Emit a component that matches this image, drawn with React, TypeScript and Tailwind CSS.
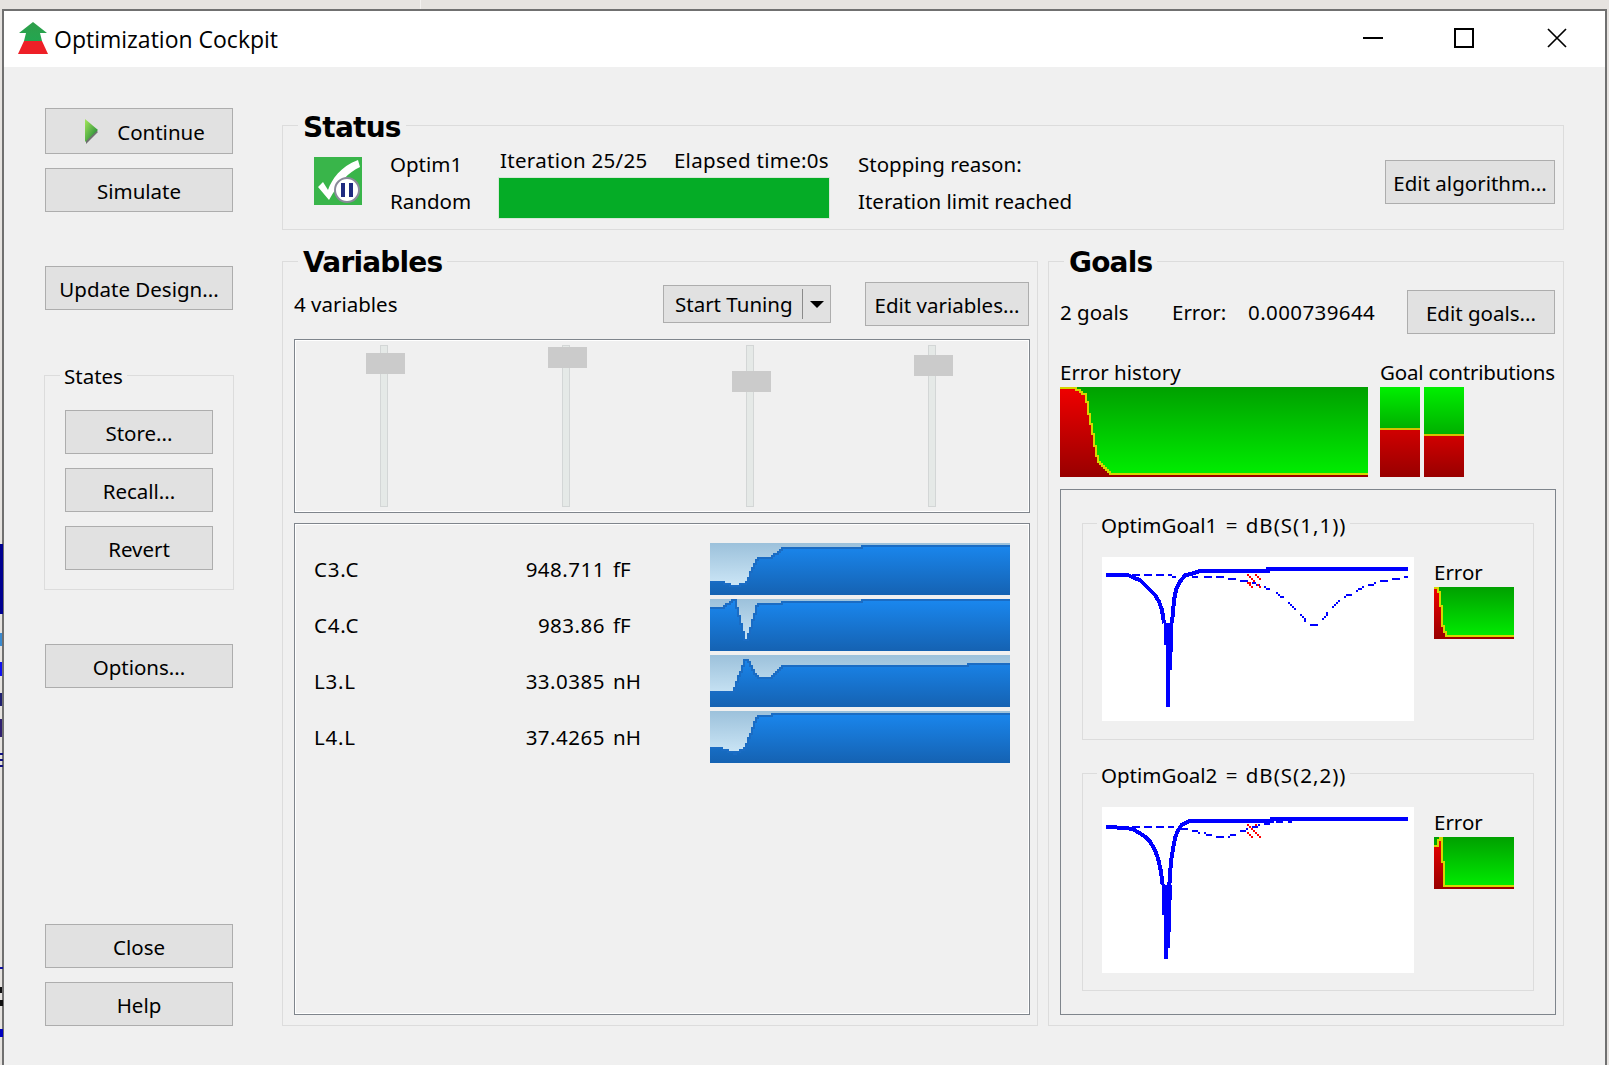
import React from "react";

type Step = [number, number];

function StepChart({ id, steps, x0, y0, w, h, bg, fill, edge, edgeW = 6 }: { id: string; steps: Step[]; x0: number; y0: number; w: number; h: number; bg: [string, string]; fill: [string, string]; edge: string; edgeW?: number }) {
  const x1 = x0 + w * 3;
  const y1 = y0 + h * 3;
  let d = `M${x0} ${steps[0][1]}`;
  steps.forEach((s, i) => {
    d += ` H${s[0]}`;
    if (i + 1 < steps.length) d += ` V${steps[i + 1][1]}`;
  });
  return (
    <svg width={w} height={h} viewBox={`${x0} ${y0} ${w * 3} ${h * 3}`} shapeRendering="crispEdges" className="block shrink-0">
      <defs>
        <linearGradient id={id + "b"} gradientUnits="userSpaceOnUse" x1="0" y1={y0} x2="0" y2={y1}>
          <stop offset="0" stopColor={bg[0]} />
          <stop offset="1" stopColor={bg[1]} />
        </linearGradient>
        <linearGradient id={id + "f"} gradientUnits="userSpaceOnUse" x1="0" y1={y0} x2="0" y2={y1}>
          <stop offset="0" stopColor={fill[0]} />
          <stop offset="1" stopColor={fill[1]} />
        </linearGradient>
      </defs>
      <rect x={x0} y={y0} width={w * 3} height={h * 3} fill={`url(#${id}b)`} />
      <path d={`${d} V${y1} H${x0} Z`} fill={`url(#${id}f)`} />
      <path d={d} fill="none" stroke={edge} strokeWidth={edgeW} transform={`translate(0 ${edgeW / 2})`} />
    </svg>
  );
}

const rows: { name: string; num: string; unit: string; top: number; steps: Step[] }[] = [
  { name: "C3.C", num: "948.711", unit: "fF", top: 39, steps: [[72, 153], [90, 159], [120, 165], [138, 159], [144, 153], [150, 141], [156, 123], [162, 111], [168, 99], [174, 87], [216, 81], [222, 75], [234, 69], [240, 63], [246, 57], [486, 51], [930, 45]] },
  { name: "C4.C", num: "983.86", unit: "fF", top: 207, steps: [[72, 231], [78, 225], [90, 219], [96, 213], [108, 207], [114, 231], [120, 255], [126, 279], [132, 303], [144, 327], [150, 309], [156, 291], [162, 267], [168, 249], [174, 225], [246, 219], [486, 213], [930, 207]] },
  { name: "L3.L", num: "33.0385", unit: "nH", top: 375, steps: [[102, 483], [108, 471], [114, 453], [120, 435], [126, 423], [132, 405], [144, 387], [150, 393], [156, 405], [162, 417], [168, 429], [174, 435], [216, 441], [222, 435], [228, 429], [234, 423], [240, 417], [246, 411], [804, 405], [930, 399]] },
  { name: "L4.L", num: "37.4265", unit: "nH", top: 543, steps: [[66, 651], [84, 657], [102, 663], [108, 669], [120, 663], [132, 657], [138, 651], [144, 639], [150, 621], [156, 609], [162, 591], [168, 573], [174, 561], [216, 555], [930, 549]] },
];

const historySteps: Step[] = [[78, 81], [90, 87], [96, 93], [108, 99], [114, 123], [120, 159], [126, 189], [132, 219], [138, 255], [144, 285], [150, 303], [156, 309], [162, 315], [168, 321], [174, 327], [180, 333], [954, 339]];
const err1: Step[] = [[1044, 111], [1050, 123], [1056, 165], [1062, 225], [1068, 243], [1272, 255]];
const err2: Step[] = [[1044, 165], [1050, 147], [1056, 141], [1062, 213], [1272, 285]];

const RED: [string, string] = ["#f00000", "#980000"];
const GREEN: [string, string] = ["#00a000", "#00f000"];
const YEL = "#d6d600";

const dash1: [number, number, number][] = [[126, 72, 24], [162, 72, 24], [198, 72, 24], [234, 72, 12], [246, 78, 12], [306, 78, 18], [342, 78, 24], [378, 78, 24], [414, 84, 24], [450, 90, 24], [486, 96, 12], [498, 102, 12], [522, 108, 6], [528, 114, 12], [558, 126, 6], [564, 132, 6], [570, 138, 12], [594, 156, 6], [600, 162, 6], [606, 168, 6], [612, 174, 6], [630, 192, 6], [636, 198, 6], [642, 204, 6], [642, 210, 6], [660, 222, 24], [696, 204, 6], [702, 198, 6], [708, 186, 6], [708, 192, 6], [726, 168, 6], [732, 162, 6], [738, 156, 6], [744, 150, 6], [762, 138, 6], [768, 132, 18], [798, 120, 6], [804, 114, 12], [816, 108, 6], [834, 102, 18], [852, 96, 6], [870, 90, 24], [906, 84, 24], [942, 78, 12]];
const dash2: [number, number, number][] = [[126, 108, 24], [162, 108, 24], [198, 108, 24], [234, 108, 18], [270, 114, 24], [306, 120, 18], [324, 126, 6], [342, 126, 6], [348, 132, 18], [378, 138, 24], [414, 138, 6], [420, 132, 18], [450, 120, 18], [468, 114, 6], [486, 108, 18], [504, 102, 6]];
const red1: Step[] = [[470, 72], [476, 78], [482, 84], [488, 90], [476, 96], [470, 96], [476, 102], [482, 108], [494, 72], [500, 78], [506, 84], [500, 102], [506, 108]];
const red2: Step[] = [[470, 102], [476, 108], [482, 114], [488, 120], [494, 126], [500, 132], [506, 138], [494, 102], [470, 126], [476, 132], [482, 138]];

function Btn({ children, className = "" }: { children: React.ReactNode; className?: string }) {
  return <div className={`flex items-center justify-center border border-[#adadad] bg-[#e1e1e1] text-black shrink-0 pt-[2px] ${className}`}>{children}</div>;
}

function Group({ title, className = "", legend = "", children }: { title: React.ReactNode; className?: string; legend?: string; children: React.ReactNode }) {
  return (
    <div className={`relative border border-[#dcdcdc] ${className}`}>
      <div className={`absolute bg-[#f0f0f0] whitespace-nowrap ${legend}`}>{title}</div>
      {children}
    </div>
  );
}

function Big({ children }: { children: React.ReactNode }) {
  return <span className="font-['DejaVu_Sans',sans-serif] text-[28px] font-bold leading-[34px] tracking-[-0.8px]">{children}</span>;
}

function Rects({ dashes, reds }: { dashes: [number, number, number][]; reds: Step[] }) {
  return (
    <>
      {dashes.map((r, i) => <rect key={i} x={r[0]} y={r[1]} width={r[2]} height="6" fill="#0000ff" />)}
      {reds.map((r, i) => <rect key={i} x={r[0]} y={r[1]} width="6" height="6" fill="#ff0000" />)}
    </>
  );
}

function Plot1() {
  return (
    <svg width="312" height="164" viewBox="36 21 936 492" shapeRendering="crispEdges" className="block shrink-0 bg-white">
      <Rects dashes={dash1} reds={[]} />
      <g fill="none" stroke="#0000ff" strokeWidth="12">
        <polyline points="48,75 114,75 132,84 150,90 165,105 180,120 195,135 207,155 216,180 222,220" />
        <polyline points="246,220 252,150 258,120 270,95 285,76 310,70 330,63 534,63 534,57 954,57" />
      </g>
      <polygon fill="#0000ff" points="222,220 250,220 246,360 240,360 240,470 228,470 228,285 222,285" />
      <Rects dashes={[]} reds={red1} />
    </svg>
  );
}

function Plot2() {
  return (
    <svg width="312" height="166" viewBox="36 51 936 498" shapeRendering="crispEdges" className="block shrink-0 bg-white">
      <Rects dashes={dash2} reds={[]} />
      <g fill="none" stroke="#0000ff">
        <polyline strokeWidth="12" points="48,111 110,114 130,118 150,130 165,140 180,155 195,180 204,205 212,240 218,285" />
        <polyline strokeWidth="12" points="238,285 243,215 250,170 256,140 265,120 275,105 300,93 546,93 546,87 954,87" />
        <polyline strokeWidth="12" points="522,99 540,99" />
        <polyline strokeWidth="9" points="558,94 580,94" />
        <polyline strokeWidth="9" points="594,94 606,94" />
      </g>
      <polygon fill="#0000ff" points="216,285 246,285 240,475 234,475 234,507 222,507 222,375 216,375" />
      <Rects dashes={[]} reds={red2} />
    </svg>
  );
}

function Slider({ handle, track = "" }: { handle: string; track?: string }) {
  return (
    <div className={`relative w-[8px] h-[162px] border border-[#d3d6d6] bg-[#e5e9e7] ${track}`}>
      <div className={`absolute w-[39px] h-[21px] bg-[#cbcbcb] ${handle}`} />
    </div>
  );
}

function GoalBox({ name, eq, plot, err, h }: { name: string; eq: string; plot: React.ReactNode; err: React.ReactNode; h: string }) {
  return (
    <Group
      title={
        <span className="relative top-[1px] [word-spacing:3px]">
          {name} = <span className="tracking-[1px]">{eq}</span>
        </span>
      }
      className={`${h} ml-[21px] mr-[21px] flex shrink-0`}
      legend="left-[14px] -top-[13px] px-1 leading-[26px]"
    >
      <div className="pl-[19px] pt-[33px]">{plot}</div>
      <div className="pl-[20px] pt-[34px]">
        <div className="leading-[28px]">Error</div>
        <div className="mt-[1px]">{err}</div>
      </div>
    </Group>
  );
}

export default function App() {
  return (
    <div className="relative w-[1609px] h-[1065px] overflow-hidden bg-[#e6e3e0] pt-[9px] px-[2px] font-['Noto_Sans',sans-serif] text-[20.5px] text-black">
      <div className="absolute left-[420px] top-0 w-px h-[9px] bg-[#f4f2f0]" />
      <div className="absolute left-0 top-[544px] w-[3px] h-[70px] bg-[#000090]" />
      <div className="absolute left-0 top-[633px] w-[2px] h-[13px] bg-[#3a8ad0]" />
      <div className="absolute left-0 top-[662px] w-[2px] h-[14px] bg-[#1010f0]" />
      <div className="absolute left-0 top-[693px] w-[2px] h-[13px] bg-[#202070]" />
      <div className="absolute left-0 top-[719px] w-[2px] h-[18px] bg-[#302070]" />
      <div className="absolute left-0 top-[753px] w-[3px] h-[2px] bg-[#101080]" />
      <div className="absolute left-0 top-[759px] w-[3px] h-[2px] bg-[#101080]" />
      <div className="absolute left-0 top-[765px] w-[3px] h-[2px] bg-[#101080]" />
      <div className="absolute left-0 top-[967px] w-[3px] h-[2px] bg-[#1010a0]" />
      <div className="absolute left-0 top-[987px] w-[2px] h-[6px] bg-[#101010]" />
      <div className="absolute left-0 top-[1000px] w-[3px] h-[6px] bg-[#101010]" />
      <div className="absolute left-0 top-[1029px] w-[3px] h-[8px] bg-[#0000c0]" />

      <div className="flex flex-col h-[1056px] border-t-2 border-x-2 border-[#707070]">
        {/* title bar */}
        <div className="flex items-center h-[56px] bg-white shrink-0 font-['Open_Sans',sans-serif] text-[23px]">
          <svg width="32" height="34" viewBox="0 0 32 34" className="ml-[14px] shrink-0">
            <defs>
              <linearGradient id="lg" x1="0" y1="0" x2="0" y2="1">
                <stop offset="0" stopColor="#2f9e4a" />
                <stop offset="1" stopColor="#23a650" />
              </linearGradient>
            </defs>
            <polygon points="15,0 29,11 22,11 24,19 6,19 8,11 1,11" fill="url(#lg)" />
            <polygon points="6,19 24,19 30,32 0,32" fill="#ee2027" />
          </svg>
          <span className="ml-[4px]">Optimization Cockpit</span>
          <svg width="20" height="20" viewBox="0 0 20 20" className="ml-auto -mt-[2px] shrink-0"><rect x="0" y="9" width="20" height="2" fill="#000" /></svg>
          <svg width="20" height="20" viewBox="0 0 20 20" className="ml-[71px] -mt-[2px] shrink-0"><rect x="1" y="1" width="18" height="18" fill="none" stroke="#000" strokeWidth="2" /></svg>
          <svg width="20" height="20" viewBox="0 0 20 20" className="ml-[73px] -mt-[2px] mr-[38px] shrink-0"><path d="M1 1L19 19M19 1L1 19" stroke="#000" strokeWidth="1.7" /></svg>
        </div>

        {/* body */}
        <div className="flex flex-1 min-h-0 bg-[#f0f0f0] pl-[41px] pr-[41px] pt-[41px] pb-[39px]">
          {/* left column */}
          <div className="flex flex-col w-[188px] shrink-0">
            <Btn className="h-[46px] pl-[15px]">
              <svg width="16" height="26" viewBox="0 0 16 26" className="mr-[17px] -ml-[4px] -mt-[2px]">
                <defs>
                  <linearGradient id="pl" x1="0" y1="0" x2="1" y2="1">
                    <stop offset="0" stopColor="#a6e85a" />
                    <stop offset="1" stopColor="#0b7a32" />
                  </linearGradient>
                </defs>
                <polygon points="2,3 14,14 2,26" fill="#707070" />
                <polygon points="1,1 14,12 1,24" fill="url(#pl)" />
              </svg>
              Continue
            </Btn>
            <Btn className="h-[44px] mt-[14px]">Simulate</Btn>
            <Btn className="h-[44px] mt-[54px]">Update Design...</Btn>
            <Group title="States" className="h-[215px] mt-[65px] -ml-px w-[190px] pl-[20px] pt-[34px] flex flex-col gap-[14px] shrink-0" legend="left-[15px] -top-[13px] px-1 leading-[26px]">
              <Btn className="h-[44px] w-[148px]">Store...</Btn>
              <Btn className="h-[44px] w-[148px]">Recall...</Btn>
              <Btn className="h-[44px] w-[148px]">Revert</Btn>
            </Group>
            <Btn className="h-[44px] mt-[54px]">Options...</Btn>
            <Btn className="h-[44px] mt-auto">Close</Btn>
            <Btn className="h-[44px] mt-[14px]">Help</Btn>
          </div>

          {/* right column */}
          <div className="flex flex-col flex-1 min-w-0 ml-[49px] pt-[17px]">
            {/* status */}
            <Group title={<span className="relative top-[3px]"><Big>Status</Big></span>} className="h-[105px] flex shrink-0" legend="left-[15px] -top-[18px] px-[5px]">
              <svg width="48" height="48" viewBox="0 0 48 48" className="ml-[31px] mt-[31px] shrink-0">
                <rect width="48" height="48" fill="#39b54a" />
                <path d="M4 30 L9 25 L14 33 C18 22 26 10 44 3 L46 10 C34 16 26 24 15 43 Z" fill="#fff" />
                <circle cx="33" cy="33" r="12" fill="#fff" stroke="#8a8a9a" strokeWidth="2" />
                <rect x="27" y="26" width="4" height="14" fill="#1f2a80" />
                <rect x="35" y="26" width="4" height="14" fill="#1f2a80" />
              </svg>
              <div className="ml-[28px] w-[109px] shrink-0 pt-[25px] leading-[26px]">
                <div>Optim1</div>
                <div className="mt-[11px]">Random</div>
              </div>
              <div className="w-[331px] shrink-0 pt-[21px]">
                <div className="flex justify-between leading-[26px] pr-[1px] pl-[1px] tracking-[0.3px]">
                  <span>Iteration 25/25</span>
                  <span>Elapsed time:0s</span>
                </div>
                <div className="h-[42px] mt-[4px] -ml-px bg-[#05ac26] border border-[#d8e8d8]" />
              </div>
              <div className="ml-[28px] pt-[25px] leading-[26px]">
                <div>Stopping reason:</div>
                <div className="mt-[11px]">Iteration limit reached</div>
              </div>
              <Btn className="ml-auto mr-[8px] mt-[34px] h-[44px] w-[170px]">Edit algorithm...</Btn>
            </Group>

            <div className="flex flex-1 min-h-0 mt-[31px] gap-[10px]">
              {/* variables */}
              <Group title={<span className="relative top-[2px]"><Big>Variables</Big></span>} className="w-[756px] shrink-0 flex flex-col pl-[11px] pr-[7px] pt-[20px] pb-[10px]" legend="left-[15px] -top-[18px] px-[5px]">
                <div className="flex items-center h-[44px] shrink-0">
                  <span>4 variables</span>
                  <div className="ml-auto flex items-stretch h-[38px] w-[168px] border border-[#adadad] bg-[#e1e1e1]">
                    <span className="flex-1 pl-[11px] leading-[36px]">Start Tuning</span>
                    <span className="my-[3px] w-px bg-[#8a8a8a]" />
                    <span className="w-[27px] flex items-center justify-center">
                      <svg width="14" height="7" viewBox="0 0 14 7"><polygon points="0,0 14,0 7,7" fill="#000" /></svg>
                    </span>
                  </div>
                  <Btn className="ml-[34px] mr-px h-[44px] w-[164px]">Edit variables...</Btn>
                </div>
                <div className="mt-[13px] h-[174px] shrink-0 flex gap-[175px] pl-[85px] pt-[5px] border border-[#7f858c] shadow-[inset_0_0_0_1px_#fff]">
                  <Slider handle="-left-[15px] top-[7px]" />
                  <Slider track="-ml-px mr-px" handle="-left-[15px] top-[1px]" />
                  <Slider handle="-left-[15px] top-[25px]" />
                  <Slider track="-ml-px mr-px" handle="-left-[15px] top-[9px]" />
                </div>
                <div className="mt-[10px] flex-1 min-h-0 border border-[#7f858c] shadow-[inset_0_0_0_1px_#fff] pl-[19px] pr-[19px] pt-[19px] flex flex-col gap-[4px]">
                  {rows.map((r, i) => (
                    <div key={r.name} className="flex items-center h-[52px]">
                      <span className="w-[121px] tracking-[0.8px]">{r.name}</span>
                      <span className="w-[170px] text-right tracking-[0.5px]">{r.num}</span>
                      <span className="ml-[8px]">{r.unit}</span>
                      <div className="ml-auto">
                        <StepChart id={`r${i}`} steps={r.steps} x0={30} y0={r.top} w={300} h={52} bg={["#9cc1db", "#d6eefc"]} fill={["#1a88f0", "#1562b2"]} edge="#1a6cc4" />
                      </div>
                    </div>
                  ))}
                </div>
              </Group>

              {/* goals */}
              <Group title={<span className="relative top-[2px]"><Big>Goals</Big></span>} className="flex-1 min-w-0 flex flex-col pl-[11px] pr-[8px] pt-[28px] pb-[10px]" legend="left-[15px] -top-[18px] px-[5px]">
                <div className="flex items-center h-[44px] shrink-0">
                  <span className="w-[112px]">2 goals</span>
                  <span className="w-[76px]">Error:</span>
                  <span className="tracking-[0.4px]">0.000739644</span>
                  <Btn className="ml-auto h-[44px] w-[148px]">Edit goals...</Btn>
                </div>
                <div className="flex mt-[24px] shrink-0">
                  <div className="w-[320px] shrink-0">
                    <div className="leading-[28px] h-[29px]">Error history</div>
                    <StepChart id="hist" steps={historySteps} x0={30} y0={81} w={308} h={90} bg={GREEN} fill={RED} edge={YEL} />
                  </div>
                  <div>
                    <div className="leading-[28px] h-[29px] whitespace-nowrap tracking-[-0.2px]">Goal contributions</div>
                    <div className="flex gap-[4px]">
                      <div className="w-[40px] h-[90px] flex flex-col">
                        <div className="h-[41px] bg-gradient-to-b from-[#00f000] to-[#00b000]" />
                        <div className="flex-1 bg-gradient-to-b from-[#d00000] to-[#980000] border-t-2 border-[#d6c000]" />
                      </div>
                      <div className="w-[40px] h-[90px] flex flex-col">
                        <div className="h-[47px] bg-gradient-to-b from-[#00f000] to-[#00b000]" />
                        <div className="flex-1 bg-gradient-to-b from-[#d00000] to-[#980000] border-t-2 border-[#d6c000]" />
                      </div>
                    </div>
                  </div>
                </div>
                <div className="mt-[12px] flex-1 min-h-0 border border-[#7f858c] pt-[33px] flex flex-col gap-[33px] -mr-px">
                  <GoalBox name="OptimGoal1" eq="dB(S(1,1))" h="h-[217px]" plot={<Plot1 />} err={<StepChart id="e1" steps={err1} x0={1032} y0={111} w={80} h={52} bg={GREEN} fill={RED} edge={YEL} />} />
                  <GoalBox name="OptimGoal2" eq="dB(S(2,2))" h="h-[218px]" plot={<Plot2 />} err={<StepChart id="e2" steps={err2} x0={1032} y0={141} w={80} h={52} bg={GREEN} fill={RED} edge={YEL} />} />
                </div>
              </Group>
            </div>
          </div>
        </div>
      </div>
    </div>
  );
}
